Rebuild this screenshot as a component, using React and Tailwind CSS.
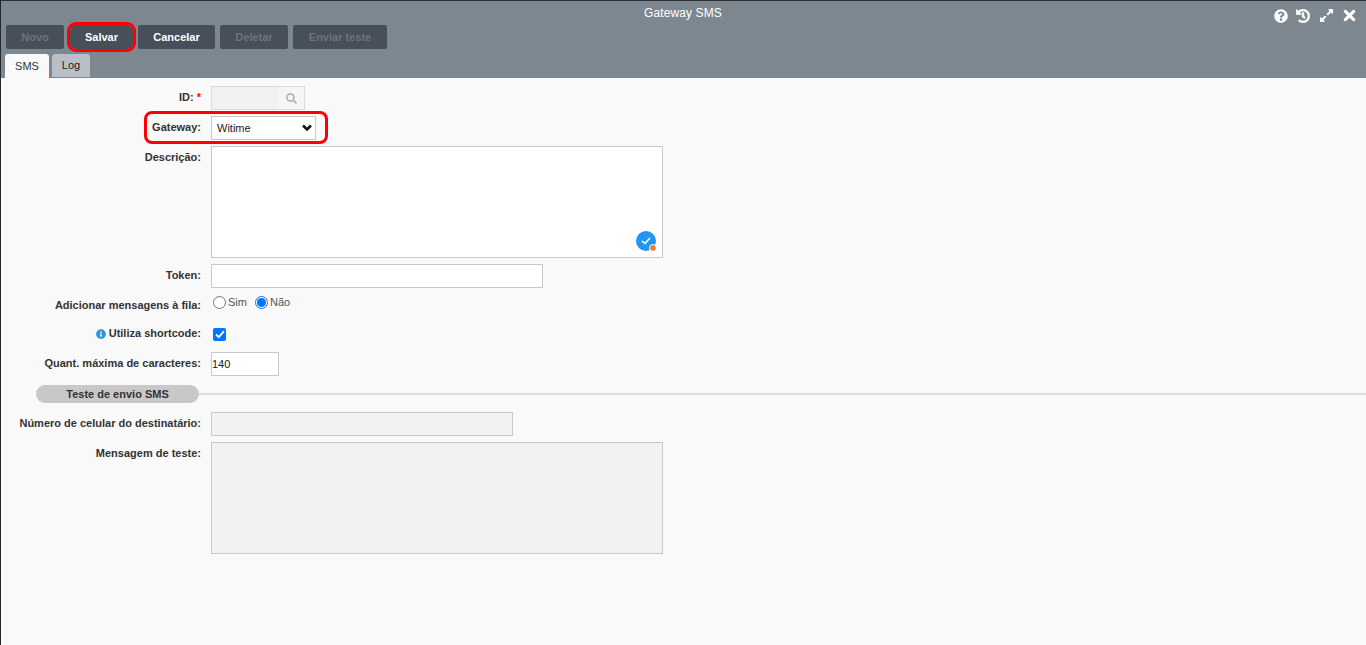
import React from "react";
import { FaQuestionCircle, FaHistory, FaExpandAlt, FaTimes, FaSearch, FaInfoCircle } from "react-icons/fa";

function Btn({ children, disabled, w, className = "" }) {
  return (
    <div className={`h-6 rounded-[2px] bg-[#464f5a] flex items-center justify-center font-bold text-[11px] ${disabled ? "text-[#6b747e]" : "text-white"} ${w} ${className}`}>
      {children}
    </div>
  );
}

function Row({ label, h, mt, top, children, className = "" }) {
  return (
    <div className={`flex ${h} ${mt} ${className}`}>
      <div className={`w-[200px] shrink-0 text-right font-bold text-[11px] text-[#333] leading-[13px] ${top}`}>{label}</div>
      <div className="ml-[10px] flex">{children}</div>
    </div>
  );
}

export default function App() {
  return (
    <div className="h-[645px] w-[1366px] overflow-hidden bg-[#f9f9f9] border-l border-[#23272e] flex flex-col text-[#333]" style={{ fontFamily: '"Liberation Sans", Arial, sans-serif' }}>
      <header className="h-[78px] shrink-0 bg-[#7d8790] border-t border-[#2b3038] flex flex-col relative">
        <div className="h-6 flex items-center justify-center text-white text-xs tracking-[0.1px] -ml-[1px]">Gateway SMS</div>
        <div className="absolute right-[8px] top-[6px] flex items-center text-white">
          <FaQuestionCircle className="w-[14px] h-[14px]" />
          <FaHistory className="w-[14px] h-[14px] ml-[8px] stroke-[24px] stroke-white" />
          <FaExpandAlt className="w-[15px] h-[15px] ml-[9px]" />
          <FaTimes className="w-[17px] h-[17px] ml-[7px]" />
        </div>
        <div className="flex pl-[5px] h-6">
          <Btn disabled w="w-[58px]">Novo</Btn>
          <Btn w="w-[63px]" className="ml-[6px] outline-[3px] outline-[#f00] rounded-[6px]">Salvar</Btn>
          <Btn w="w-[77px]" className="ml-[5px]">Cancelar</Btn>
          <Btn disabled w="w-[68px]" className="ml-[5px]">Deletar</Btn>
          <Btn disabled w="w-[94px]" className="ml-[5px]">Enviar teste</Btn>
        </div>
        <div className="flex pl-[4px] mt-[5px] items-start">
          <div className="w-[44px] h-6 bg-[#f9f9f9] rounded-t-[3px] flex items-center justify-center text-[11px] text-[#333]">SMS</div>
          <div className="w-[38px] h-[23px] ml-[3px] bg-[#b9bfc9] rounded-t-[3px] flex items-center justify-center text-[11px] text-[#222]">Log</div>
        </div>
      </header>

      <main className="flex-1 flex flex-col">
        <Row label={<>ID: <span className="text-[#f00]">*</span></>} h="h-6" mt="mt-2" top="pt-[5px]">
          <div className="w-[94px] h-6 border border-[#dcdcdc] bg-[#f5f5f5] flex items-center">
            <div className="w-[66px] h-full bg-[#f1f1f1]" />
            <FaSearch className="w-[11px] h-[11px] ml-[8px] text-[#b5b5b5]" />
          </div>
        </Row>
        <Row label="Gateway:" h="h-6" mt="mt-[6px]" top="pt-[5px]" className="relative">
          <div className="w-[105px] h-6 border border-[#c8c8c8] bg-white flex items-center justify-between pl-[5px] pr-[3px] text-[11px] text-[#222]">
            Witime
            <svg width="10" height="8" viewBox="0 0 10 8"><path d="M1 1.5 L5 5.5 L9 1.5" fill="none" stroke="#111" strokeWidth="2.6" /></svg>
          </div>
          <div className="absolute left-[143px] -top-[5px] w-[184px] h-[33px] border-[3px] border-[#f00] rounded-[8px]" />
        </Row>
        <Row label="Descrição:" h="h-[112px]" mt="mt-[6px]" top="pt-[5px]">
          <div className="w-[452px] h-[112px] border border-[#c8c8c8] bg-white flex items-end justify-end pr-[6px] pb-[6px]">
            <div className="relative w-[20px] h-[20px] rounded-full bg-[#2196f3] flex items-center justify-center">
              <svg width="10" height="8" viewBox="0 0 10 8"><path d="M1 4 L4 6.5 L9 1" fill="none" stroke="#fff" strokeWidth="1.6" /></svg>
              <div className="absolute right-0 bottom-0 w-[6px] h-[6px] rounded-full bg-[#f57c1f] outline outline-white" />
            </div>
          </div>
        </Row>
        <Row label="Token:" h="h-6" mt="mt-[6px]" top="pt-[5px]">
          <div className="w-[332px] h-6 border border-[#c8c8c8] bg-white" />
        </Row>
        <Row label="Adicionar mensagens à fila:" h="h-[15px]" mt="mt-[7px]" top="pt-[4px]">
          <div className="flex items-center text-[11px] text-[#555] h-[15px] ml-[2px]">
            <span className="w-[13px] h-[13px] rounded-full border border-[#767676] bg-white" />
            <span className="ml-[2px]">Sim</span>
            <span className="ml-[8px] w-[13px] h-[13px] rounded-full border border-[#0075ff] bg-white flex items-center justify-center">
              <span className="w-[9px] h-[9px] rounded-full bg-[#0075ff]" />
            </span>
            <span className="ml-[2px]">Não</span>
          </div>
        </Row>
        <Row label={<span className="inline-flex items-center justify-end"><FaInfoCircle className="w-[10px] h-[10px] text-[#2f93e0] mr-[3px]" />Utiliza shortcode:</span>} h="h-[13px]" mt="mt-[17px]" top="">
          <div className="w-[13px] h-[13px] ml-[2px] mt-[1px] rounded-[2px] bg-[#0075ff] flex items-center justify-center">
            <svg width="10" height="9" viewBox="0 0 10 9"><path d="M1 4.5 L3.8 7.2 L9 1.2" fill="none" stroke="#fff" strokeWidth="1.8" /></svg>
          </div>
        </Row>
        <Row label="Quant. máxima de caracteres:" h="h-6" mt="mt-[12px]" top="pt-[5px]">
          <div className="w-[68px] h-6 border border-[#c8c8c8] bg-white flex items-center text-[11px] text-[#222]">140</div>
        </Row>
        <div className="flex items-center h-[18px] mt-[9px] pl-[35px]">
          <div className="w-[163px] h-[18px] rounded-full bg-[#c8c8c8] flex items-center justify-center font-bold text-[11px] text-[#333]">Teste de envio SMS</div>
          <div className="flex-1 h-[2px] bg-[#dedede]" />
        </div>
        <Row label="Número de celular do destinatário:" h="h-6" mt="mt-[9px]" top="pt-[5px]">
          <div className="w-[302px] h-6 border border-[#c8c8c8] bg-[#f2f2f2]" />
        </Row>
        <Row label="Mensagem de teste:" h="h-[112px]" mt="mt-[6px]" top="pt-[5px]">
          <div className="w-[452px] h-[112px] border border-[#c8c8c8] bg-[#f2f2f2]" />
        </Row>
      </main>
    </div>
  );
}
